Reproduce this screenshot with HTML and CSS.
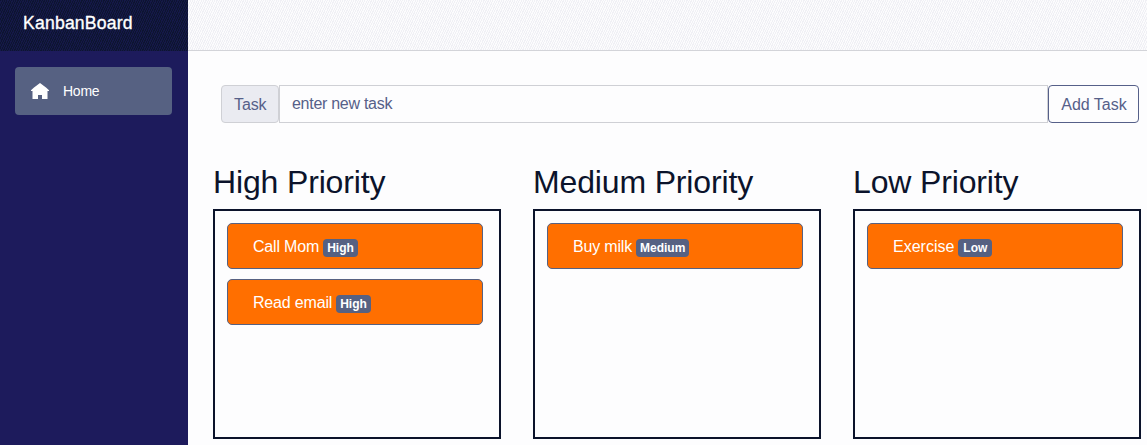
FILE: index.html
```html
<!DOCTYPE html>
<html lang="en">
<head>
<meta charset="utf-8">
<title>KanbanBoard</title>
<link rel="stylesheet" href="styles.css">
</head>
<body>
<div class="page">
  <aside class="sidebar">
    <header class="brand"><a class="brand-name">KanbanBoard</a></header>
    <nav class="nav">
      <a class="nav-link">
        <svg class="nav-icon" viewBox="0 0 18 16" aria-hidden="true"><path d="M9 0l6 4.4L18 7.2V8h-1.5v8H11v-4H7v4H1.500V8H0v-.8l3-2.800z" fill="#fff"/></svg>
        <span class="nav-text">Home</span>
      </a>
    </nav>
  </aside>
  <main class="main">
    <div class="top-row"></div>
    <div class="content">
      <form class="input-group">
        <span class="input-label"><span class="label-text">Task</span></span>
        <input class="input-field" type="text" placeholder="enter new task">
        <button class="add-button" type="button">Add Task</button>
      </form>
      <div class="board">
        <section class="column">
          <h2 class="column-title">High Priority</h2>
          <div class="dropzone">
            <div class="card"><span class="task">Call Mom</span><span class="badge">High</span></div>
            <div class="card"><span class="task">Read email</span><span class="badge">High</span></div>
          </div>
        </section>
        <section class="column">
          <h2 class="column-title">Medium Priority</h2>
          <div class="dropzone">
            <div class="card"><span class="task">Buy milk</span><span class="badge">Medium</span></div>
          </div>
        </section>
        <section class="column">
          <h2 class="column-title">Low Priority</h2>
          <div class="dropzone">
            <div class="card"><span class="task task-wide">Exercise</span><span class="badge badge-low">Low</span></div>
          </div>
        </section>
      </div>
    </div>
  </main>
</div>
</body>
</html>
```
FILE: styles.css
```css
* { box-sizing: border-box; }
body {
  margin: 0;
  background: #fdfdfe;
  color: #0b132b;
  font: 16px/24px "Liberation Sans", Arial, sans-serif;
}
.page { display: flex; height: 445px; overflow: hidden; }
.sidebar { width: 188px; flex: none; background: #1d1b5c; }
.brand {
  height: 51px;
  padding: 11px 0 0 23px;
  background-color: #101539;
  background-image: repeating-linear-gradient(115deg, #0d1530 0 1px, #151848 1px 2px);
}
.brand-name {
  color: #fff;
  font-size: 17.6px;
  letter-spacing: .2px;
  -webkit-text-stroke: .35px #fff;
}
.nav { padding: 16px 16px 0 15px; }
.nav-link {
  display: flex;
  align-items: center;
  height: 48px;
  padding-left: 16px;
  border-radius: 4px;
  background: #566182;
  color: #fff;
  font-size: 14px;
}
.nav-icon { width: 18px; height: 16px; margin-top: -1px; }
.nav-text { margin-left: 14px; letter-spacing: -.25px; }
.main { flex: 1; min-width: 0; }
.top-row {
  height: 51px;
  border-bottom: 1px solid #d3d4d9;
  background-color: #f6f6f9;
  background-image: repeating-linear-gradient(115deg, #f0f0f5 0 1px, #fcfcfd 1px 2px);
}
.content { padding: 34px 6px 0 25px; }
.input-group { display: flex; height: 38px; margin: 0 2px 0 8px; }
.input-label, .input-field, .add-button { font: inherit; color: #566089; }
.input-label {
  width: 58px;
  padding: 7px 0 0 12px;
  border: 1px solid #cfd0d5;
  border-radius: 4px;
  background: #eaebf1;
}
.label-text { letter-spacing: -.1px; }
.input-field {
  flex: 1;
  min-width: 0;
  padding: 6px 12px;
  border: 1px solid #cfd0d5;
  background: #fdfdfe;
  letter-spacing: -.28px;
}
.input-field::placeholder { color: #566089; opacity: 1; }
.add-button {
  width: 91px;
  padding: 2px 0 0 1px;
  border: 1px solid #566089;
  border-radius: 4px;
  background: #fdfdfe;
}
.board { display: grid; grid-template-columns: repeat(3, 288px); gap: 32px; margin-top: 40px; }
.column-title {
  margin: 0 0 7px;
  font-size: 32px;
  font-weight: 400;
  line-height: 39px;
  letter-spacing: -.15px;
}
.dropzone {
  display: flex;
  flex-direction: column;
  gap: 10px;
  height: 230px;
  padding: 12px 16px 12px 12px;
  border: 2px solid #0b132b;
}
.card {
  display: flex;
  align-items: center;
  height: 46px;
  padding-left: 25px;
  border: 1px solid #566182;
  border-radius: 5px;
  background: #ff6f00;
  color: #fff;
}
.task { margin-top: 2px; letter-spacing: -.18px; }
.task-wide { letter-spacing: 0; }
.badge {
  height: 18px;
  margin: 3px 0 0 4px;
  padding: 0 4px;
  border-radius: 4px;
  background: #566182;
  font-size: 12px;
  font-weight: 700;
  line-height: 18px;
}
.badge-low { padding: 0 5px; }
```
